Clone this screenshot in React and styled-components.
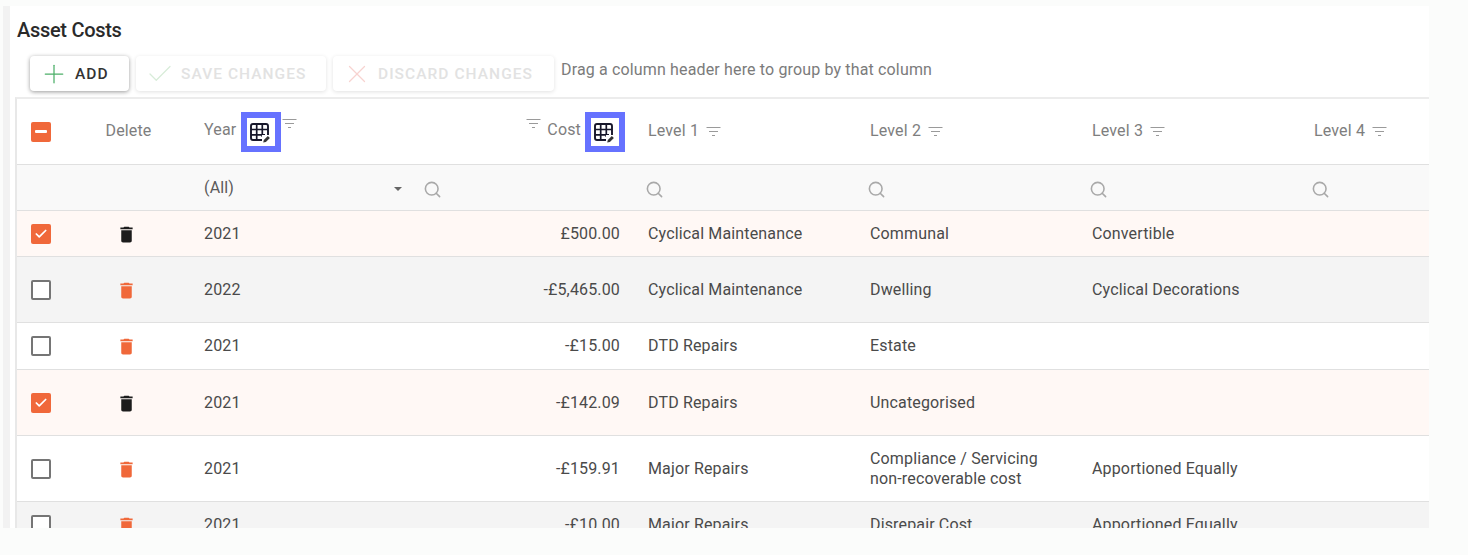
import { createGlobalStyle } from "styled-components";
import styled from "styled-components";
import { Plus, Check, X, Search } from "lucide-react";

const Global = createGlobalStyle`
  html, body { margin: 0; padding: 0; background: #fbfcfb; }
  body { font-family: Roboto, "Liberation Sans", sans-serif; font-size: 16px; letter-spacing: 0.15px; color: #4a4a4a; }
`;

const Page = styled.div`
  width: 1468px;
  height: 555px;
  box-sizing: border-box;
  padding: 6px 39px 27px 3px;
  overflow: hidden;
`;

const Panel = styled.div`
  height: 100%;
  box-sizing: border-box;
  background: #fff;
  border-left: 7px solid #f2f2f2;
  padding-left: 6px;
  overflow: hidden;
`;

const Title = styled.h2`
  margin: 0;
  padding: 13px 0 0 1px;
  height: 36px;
  box-sizing: border-box;
  font-size: 20px;
  line-height: 22px;
  font-weight: 500;
  letter-spacing: -0.3px;
  color: #2a2a2a;
`;

const Toolbar = styled.div`
  display: flex;
  align-items: flex-start;
  gap: 7px;
  height: 56px;
  padding: 14px 0 0 14px;
  box-sizing: border-box;
`;

const Button = styled.button`
  display: flex;
  align-items: center;
  gap: 6px;
  width: ${(p) => p.$width}px;
  height: 35px;
  box-sizing: border-box;
  padding: 0 0 0 9px;
  border: 0;
  border-radius: 4px;
  background: #fff;
  font-family: inherit;
  font-size: 15.5px;
  font-weight: 500;
  letter-spacing: 1.05px;
  color: ${(p) => (p.disabled ? "#e2e2e2" : "#333")};
  box-shadow: ${(p) =>
    p.disabled
      ? "0 1px 4px rgba(0, 0, 0, 0.12)"
      : "0 1px 4px rgba(0, 0, 0, 0.4)"};
`;

const DragHint = styled.span`
  margin: 4px 0 0 0;
  line-height: 20px;
  color: #7b7b7b;
`;

const Table = styled.div`
  border-left: 2px solid #e8e8e8;
  border-top: 2px solid #ececec;
  margin-left: -1px;
  margin-top: -1px;
`;

const Row = styled.div`
  display: grid;
  grid-template-columns: 48px 127px repeat(6, 222px);
  height: ${(p) => p.$height}px;
  box-sizing: border-box;
  border-bottom: 1px solid #e0e0e0;
  background: ${(p) => p.$bg || "#fff"};
`;

const Cell = styled.div`
  display: flex;
  align-items: center;
  min-width: 0;
  padding: 0 ${(p) => p.$right || 12}px 0 12px;
  justify-content: ${(p) => p.$justify || "flex-start"};
  line-height: 20px;
  white-space: ${(p) => (p.$wrap ? "normal" : "nowrap")};
`;

const CheckCell = styled(Cell)`
  padding: 0;
`;

const HeadText = styled.span`
  color: #7e7e7e;
  margin: -4px 0 0 ${(p) => p.$left || 0}px;
`;

const LevelText = styled.span`
  color: #7e7e7e;
  margin-top: -2px;
`;

const CheckBox = styled.span`
  display: flex;
  align-items: center;
  justify-content: center;
  width: 20px;
  height: 20px;
  box-sizing: border-box;
  border-radius: 2px;
  border: ${(p) => (p.$on ? "0" : "2px solid #757575")};
  background: ${(p) => (p.$on ? "#f0683a" : "#fff")};
  color: #fff;
`;

const Dash = styled.span`
  width: 12px;
  height: 3px;
  border-radius: 1px;
  background: #fff;
`;

const IconSlot = styled.span`
  display: flex;
  align-items: center;
  justify-content: center;
  width: 30px;
  flex: none;
`;

const BlueBox = styled.span`
  display: flex;
  align-items: center;
  justify-content: center;
  flex: none;
  width: 40px;
  height: 40px;
  box-sizing: border-box;
  padding-right: 2px;
  border: 6px solid #6672ff;
  background: #fff;
  margin: 0 ${(p) => (p.$end ? -1 : 0)}px 0 ${(p) => (p.$end ? 4 : 5)}px;
`;

const RaisedFilter = styled.span`
  display: flex;
  margin: -16px 0 0 ${(p) => p.$left || 0}px;
`;

const SmallFilter = styled.span`
  display: flex;
  margin-left: 7px;
`;

const SearchIcon = styled(Search)`
  color: #a9a9a9;
  margin: 3px 0 0 -3px;
`;

const Caret = styled.span`
  width: 0;
  height: 0;
  margin: 2px 0 0 auto;
  border-left: 4.5px solid transparent;
  border-right: 4.5px solid transparent;
  border-top: 4.5px solid #666;
`;

const AllText = styled.span`
  color: #5b5b5b;
  margin-top: 1px;
`;

const TrashSlot = styled.span`
  display: flex;
  margin: 1px 0 0 -4px;
`;

const FilterLines = () => (
  <svg width="15" height="9" viewBox="0 0 15 9" fill="none" stroke="#9a9a9a" strokeWidth="1">
    <path d="M0.5 0.5H14.5M3 4.5H12M6 8.5H9" />
  </svg>
);

const Trash = ({ color }) => (
  <svg width="21" height="21" viewBox="0 0 24 24" fill={color}>
    <path d="M6 19c0 1.1.9 2 2 2h8c1.1 0 2-.9 2-2V7H6v12zM19 4h-3.5l-1-1h-5l-1 1H5v2h14V4z" />
  </svg>
);

const GridEdit = () => (
  <svg width="24" height="24" viewBox="0 0 24 24" fill="none">
    <rect x="3" y="4" width="17" height="16" rx="2" stroke="#17172a" strokeWidth="1.9" />
    <path d="M3 9.5H20M3 14.8H17M8.7 4V20M14.3 4V17" stroke="#17172a" strokeWidth="1.7" />
    <rect x="14" y="15" width="9" height="9" fill="#fff" />
    <path d="M15.2 22.6l.6-2.7 4-4 2.1 2.1-4 4z" fill="#333" />
  </svg>
);

const levelColumns = ["Level 1", "Level 2", "Level 3", "Level 4"];

const rows = [
  { h: 46, on: true, year: "2021", cost: "£500.00", l1: "Cyclical Maintenance", l2: "Communal", l3: "Convertible" },
  { h: 66, year: "2022", cost: "-£5,465.00", l1: "Cyclical Maintenance", l2: "Dwelling", l3: "Cyclical Decorations", alt: true },
  { h: 47, year: "2021", cost: "-£15.00", l1: "DTD Repairs", l2: "Estate" },
  { h: 66, on: true, year: "2021", cost: "-£142.09", l1: "DTD Repairs", l2: "Uncategorised" },
  { h: 66, year: "2021", cost: "-£159.91", l1: "Major Repairs", l2: "Compliance / Servicing non-recoverable cost", l3: "Apportioned Equally" },
  { h: 46, year: "2021", cost: "-£10.00", l1: "Major Repairs", l2: "Disrepair Cost", l3: "Apportioned Equally", alt: true },
];

export default function App() {
  return (
    <Page>
      <Global />
      <Panel>
        <Title>Asset Costs</Title>
        <Toolbar>
          <Button $width={99}>
            <IconSlot>
              <Plus size={30} color="#4caf68" strokeWidth={1} />
            </IconSlot>
            ADD
          </Button>
          <Button $width={190} disabled>
            <IconSlot>
              <Check size={30} color="#d8ecd9" strokeWidth={1} />
            </IconSlot>
            SAVE CHANGES
          </Button>
          <Button $width={221} disabled>
            <IconSlot>
              <X size={34} color="#f7d3d0" strokeWidth={1} />
            </IconSlot>
            DISCARD CHANGES
          </Button>
          <DragHint>Drag a column header here to group by that column</DragHint>
        </Toolbar>
        <Table>
          <Row $height={66}>
            <CheckCell $justify="center">
              <CheckBox $on>
                <Dash />
              </CheckBox>
            </CheckCell>
            <Cell $justify="center">
              <LevelText>Delete</LevelText>
            </Cell>
            <Cell>
              <HeadText>Year</HeadText>
              <BlueBox>
                <GridEdit />
              </BlueBox>
              <RaisedFilter $left={1}>
                <FilterLines />
              </RaisedFilter>
            </Cell>
            <Cell $justify="flex-end">
              <RaisedFilter>
                <FilterLines />
              </RaisedFilter>
              <HeadText $left={6}>Cost</HeadText>
              <BlueBox $end>
                <GridEdit />
              </BlueBox>
            </Cell>
            {levelColumns.map((name) => (
              <Cell key={name}>
                <LevelText>{name}</LevelText>
                <SmallFilter>
                  <FilterLines />
                </SmallFilter>
              </Cell>
            ))}
          </Row>
          <Row $height={46} $bg="#f9f9f9">
            <Cell />
            <Cell />
            <Cell>
              <AllText>(All)</AllText>
              <Caret />
            </Cell>
            <Cell>
              <SearchIcon size={19} strokeWidth={2} />
            </Cell>
            {levelColumns.map((name) => (
              <Cell key={name}>
                <SearchIcon size={19} strokeWidth={2} />
              </Cell>
            ))}
          </Row>
          {rows.map((r, i) => (
            <Row key={i} $height={r.h} $bg={r.on ? "#fff8f5" : r.alt ? "#f4f4f4" : "#fff"}>
              <CheckCell $justify="center">
                <CheckBox $on={r.on}>{r.on && <Check size={14} strokeWidth={3} />}</CheckBox>
              </CheckCell>
              <Cell $justify="center">
                <TrashSlot>
                  <Trash color={r.on ? "#1c1c1c" : "#f0683a"} />
                </TrashSlot>
              </Cell>
              <Cell>{r.year}</Cell>
              <Cell $justify="flex-end" $right={16}>
                {r.cost}
              </Cell>
              <Cell>{r.l1}</Cell>
              <Cell $wrap>{r.l2}</Cell>
              <Cell>{r.l3}</Cell>
              <Cell />
            </Row>
          ))}
        </Table>
      </Panel>
    </Page>
  );
}
